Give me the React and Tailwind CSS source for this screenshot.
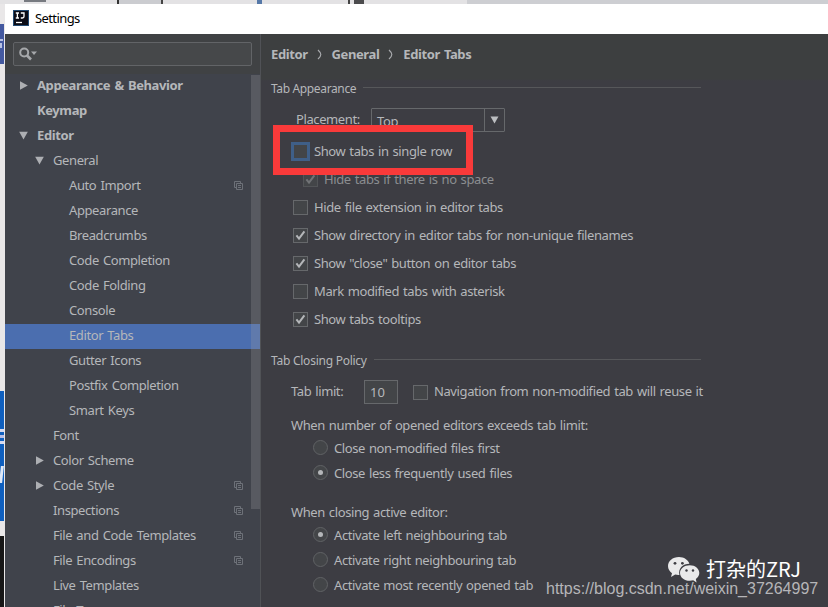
import React from "react";

const UI = "font-['Noto_Sans','Noto_Sans_CJK_SC',sans-serif]";

const TREE = [
  { label: "Appearance & Behavior", pad: "pl-[13px]", arrow: "right", bold: true },
  { label: "Keymap", pad: "pl-[13px]", bold: true },
  { label: "Editor", pad: "pl-[13px]", arrow: "down", bold: true },
  { label: "General", pad: "pl-[29px]", arrow: "down" },
  { label: "Auto Import", pad: "pl-[45px]", copy: true },
  { label: "Appearance", pad: "pl-[45px]" },
  { label: "Breadcrumbs", pad: "pl-[45px]" },
  { label: "Code Completion", pad: "pl-[45px]" },
  { label: "Code Folding", pad: "pl-[45px]" },
  { label: "Console", pad: "pl-[45px]" },
  { label: "Editor Tabs", pad: "pl-[45px]", selected: true },
  { label: "Gutter Icons", pad: "pl-[45px]" },
  { label: "Postfix Completion", pad: "pl-[45px]" },
  { label: "Smart Keys", pad: "pl-[45px]" },
  { label: "Font", pad: "pl-[29px]" },
  { label: "Color Scheme", pad: "pl-[29px]", arrow: "right" },
  { label: "Code Style", pad: "pl-[29px]", arrow: "right", copy: true },
  { label: "Inspections", pad: "pl-[29px]", copy: true },
  { label: "File and Code Templates", pad: "pl-[29px]", copy: true },
  { label: "File Encodings", pad: "pl-[29px]", copy: true },
  { label: "Live Templates", pad: "pl-[29px]" },
  { label: "File Types", pad: "pl-[29px]" },
];

function Arrow({ dir }) {
  return (
    <svg width="11" height="11" viewBox="0 0 11 11" className="block" fill="#adafb3">
      {dir === "right" && <path d="M2 1.2 L9.8 5.5 L2 9.8Z" />}
      {dir === "down" && <path d="M1.2 1.8 H9.8 L5.5 9.6Z" />}
    </svg>
  );
}

function CopyIcon() {
  return (
    <svg width="10" height="10" viewBox="0 0 10 10" fill="none" stroke="#6d7178" className="block">
      <path d="M2.5 6.5 H0.5 V0.5 H6.5 V2.5" />
      <path d="M2.5 2.5 H8.5 V8.5 H2.5Z" />
      <path d="M4 4.5 H7 M4 6.5 H7" />
    </svg>
  );
}

function TreeRow({ item }) {
  return (
    <div className={`flex h-[25px] shrink-0 items-center pb-[2px] ${item.pad} ${item.selected ? "bg-[#4b6eaf]" : ""}`}>
      <div className="w-[19px] shrink-0">
        <Arrow dir={item.arrow} />
      </div>
      <span className={`relative -top-px grow tracking-[-0.4px] whitespace-nowrap [word-spacing:1.2px] ${item.bold ? "font-bold" : ""}`}>
        {item.label}
      </span>
      {item.copy && (
        <div className="mr-[16px]">
          <CopyIcon />
        </div>
      )}
    </div>
  );
}

function Check({ checked, focus, dim }) {
  if (focus) {
    return <span className="-mx-[2px] block size-[19px] shrink-0 border-[3px] border-[#3f5f88] bg-[#434548]" />;
  }
  return (
    <span className={`flex size-[15px] shrink-0 items-center justify-center border bg-[#434548] ${dim ? "border-[#525457]" : "border-[#66686b]"}`}>
      {checked && (
        <svg width="13" height="13" viewBox="0 0 13 13" fill="none" stroke={dim ? "#717376" : "#b4b6b9"} strokeWidth="2">
          <path d="M2.4 6.4 L5 9.6 L10.4 2.4" />
        </svg>
      )}
    </span>
  );
}

function CheckRow({ label, pad = "pl-[22px]", ...rest }) {
  return (
    <div className={`flex h-7 items-center gap-[6px] pb-px ${pad} ${rest.dim ? "text-[#8b8d90]" : ""}`}>
      <Check {...rest} />
      <span className="relative -top-px whitespace-nowrap">{label}</span>
    </div>
  );
}

function RadioRow({ label, on }) {
  return (
    <div className="flex h-[25px] items-center gap-[6px] pb-[2px] pl-[42px]">
      <span className="flex size-[15px] items-center justify-center rounded-full border border-[#606265] bg-[#434548]">
        {on && <span className="size-[5px] rounded-full bg-[#b4b6b9]" />}
      </span>
      <span className="whitespace-nowrap">{label}</span>
    </div>
  );
}

function SectionTitle({ children, track }) {
  return (
    <div className="flex h-7 w-[430px] items-center gap-[7px] text-[12px]">
      <span className={`whitespace-nowrap [word-spacing:0px] ${track}`}>{children}</span>
      <span className="mb-[3px] h-px grow bg-[#56575a]" />
    </div>
  );
}

function Chevron() {
  return (
    <svg width="6" height="11" viewBox="0 0 6 11" fill="none" stroke="#a9abae" strokeWidth="1.2" className="relative top-px">
      <path d="M1 1 Q3.8 3.5 3.8 5.5 Q3.8 7.5 1 10" />
    </svg>
  );
}

function Sidebar() {
  return (
    <div className="relative flex w-[256px] shrink-0 flex-col overflow-hidden border-r border-[#505256] bg-[#40434b]">
      <div className="h-10 shrink-0 bg-[#404244] px-2 pt-2">
        <div className="flex h-6 w-[239px] items-center rounded-[2px] border border-[#626467] bg-[#46484a] pb-px pl-[5px]">
          <svg width="19" height="14" viewBox="0 0 19 14" fill="none" stroke="#a6a8ab">
            <circle cx="5.2" cy="5.5" r="4" strokeWidth="2" />
            <path d="M8 8.5 L12 12.5" strokeWidth="2.6" />
            <path d="M12 4.5 H18 L15 8Z" fill="#a6a8ab" stroke="none" />
          </svg>
        </div>
      </div>
      {TREE.map((item) => (
        <TreeRow key={item.label} item={item} />
      ))}
      <div className="absolute top-[41px] right-0 h-[434px] w-[9px] bg-[#9ea0a4]/25" />
    </div>
  );
}

function Content() {
  return (
    <div className="flex grow flex-col bg-[#3d3d43] bg-linear-to-b from-[#3d3f40] from-[45px] to-[#3d3d43] to-[47px] pl-[10px] tracking-[-0.4px] [word-spacing:1px]">
      <div className="flex h-[41px] items-center gap-[9px] pb-[2px] font-bold">
        <span>Editor</span>
        <Chevron />
        <span>General</span>
        <Chevron />
        <span>Editor Tabs</span>
      </div>
      <SectionTitle track="tracking-[-0.36px]">Tab Appearance</SectionTitle>
      <div className="flex h-[35px] items-start pt-[5px] pl-[25px]">
        <span className="w-[75px] leading-[23px]">Placement:</span>
        <div className="flex h-6 w-[134px] rounded-[1px] border border-[#66686b]">
          <span className="grow pl-[5px] leading-6">Top</span>
          <span className="flex w-5 items-center justify-center border-l border-[#66686b]">
            <svg width="9" height="8" viewBox="0 0 9 8" fill="#bcbec1">
              <path d="M0.5 0.5 H8.5 L4.5 7.5Z" />
            </svg>
          </span>
        </div>
      </div>
      <CheckRow label="Show tabs in single row" focus />
      <CheckRow label="Hide tabs if there is no space" checked dim pad="pl-[32px]" />
      <CheckRow label="Hide file extension in editor tabs" />
      <CheckRow label="Show directory in editor tabs for non-unique filenames" checked />
      <CheckRow label={'Show "close" button on editor tabs'} checked />
      <CheckRow label="Mark modified tabs with asterisk" />
      <CheckRow label="Show tabs tooltips" checked />
      <div className="mt-[13px]">
        <SectionTitle track="tracking-[-0.25px]">Tab Closing Policy</SectionTitle>
      </div>
      <div className="flex h-[34px] items-center pl-5">
        <span className="relative -top-px w-[73px]">Tab limit:</span>
        <span className="mr-[15px] flex h-6 w-[34px] items-center border border-[#66686b] bg-[#434548] pb-px pl-[5px] tracking-normal">10</span>
        <Check />
        <span className="relative -top-px ml-[6px] whitespace-nowrap">Navigation from non-modified tab will reuse it</span>
      </div>
      <div className="mt-[6px] h-[21px] pl-5 leading-[21px]">When number of opened editors exceeds tab limit:</div>
      <RadioRow label="Close non-modified files first" />
      <RadioRow label="Close less frequently used files" on />
      <div className="mt-4 h-[21px] pl-5 leading-[21px]">When closing active editor:</div>
      <RadioRow label="Activate left neighbouring tab" on />
      <RadioRow label="Activate right neighbouring tab" />
      <RadioRow label="Activate most recently opened tab" />
    </div>
  );
}

function DesktopEdge() {
  return (
    <div className="flex w-[5px] shrink-0 flex-col bg-[#e9e7e8]">
      <div className="mt-5 h-10 w-1 bg-[#4459a0] pt-[15px]">
        <div className="h-[2px] w-[3px] bg-[#b9c2e2]" />
        <div className="mt-[2px] h-[5px] w-[2px] bg-[#b9c2e2]" />
      </div>
      <div className="mt-[327px] h-[130px] w-1 bg-[#0f5fbe] pt-[38px]">
        <div className="h-[3px] bg-[#d5daf0]" />
        <div className="mt-[3px] h-[3px] bg-[#b9bfe6]" />
        <div className="mt-[3px] h-[3px] bg-[#d5daf0]" />
        <div className="mt-[22px] h-[17px] w-[3px] -skew-x-6 bg-[#dfe8f6]" />
      </div>
      <div className="mt-[15px] w-1 grow bg-[#161616]" />
    </div>
  );
}

function Watermark() {
  return (
    <>
      <div className="absolute top-[554px] left-[667px] flex items-center gap-[6px]">
        <svg width="33" height="29" viewBox="0 0 33 29" fill="#e9e9ea">
          <path d="M12 2 C5.5 2 1 6 1 11 C1 14 2.6 16.6 5 18.2 L4 22 L8.2 19.6 C9.6 20 11 20.1 12.4 20 C11 13 16 9 22.4 8.8 C21.2 4.8 17 2 12 2Z" />
          <path d="M22.8 10.2 C17.2 10.2 13 13.6 13 18 C13 22.4 17.2 25.8 22.8 25.8 C24 25.8 25.2 25.6 26.2 25.3 L29.6 27.4 L28.8 24 C31 22.6 32.3 20.4 32.3 18 C32.3 13.6 28.2 10.2 22.8 10.2Z" />
          <g fill="#3d3d43">
            <circle cx="8" cy="8.3" r="1.4" />
            <circle cx="15.4" cy="8.3" r="1.4" />
            <circle cx="19.5" cy="15.5" r="1.2" />
            <circle cx="26" cy="15.5" r="1.2" />
          </g>
        </svg>
        <span className="font-['Noto_Sans_CJK_SC',sans-serif] text-[20px] leading-[30px] whitespace-nowrap text-white">打杂的ZRJ</span>
      </div>
      <div className="absolute top-[579px] left-[546px] font-['Liberation_Sans',sans-serif] text-[16px] leading-5 whitespace-nowrap text-[#b5b5b8]">
        https://blog.csdn.net/weixin_37264997
      </div>
    </>
  );
}

export default function App() {
  return (
    <div className={`relative flex h-[607px] w-[828px] flex-col overflow-hidden text-[13px] leading-[18px] text-[#b5b7ba] ${UI}`}>
      <div className="flex h-1 shrink-0 items-stretch bg-[#e3e2e4]">
        <div className="ml-[24px] h-[2px] w-[22px] bg-[#777a80]" />
        <div className="ml-[71px] w-[2px] bg-[#333]" />
        <div className="w-[42px] bg-[#cbccd0]" />
        <div className="w-[2px] bg-[#444]" />
        <div className="ml-[94px] w-[5px] bg-[#5578a8]" />
        <div className="ml-[86px] w-[2px] bg-[#444]" />
        <div className="ml-[4px] w-[10px] bg-[#4b4b4d]" />
        <div className="ml-[103px] grow bg-[#cdced2]" />
      </div>
      <div className="flex min-h-0 grow">
        <DesktopEdge />
        <div className="flex grow flex-col">
          <div className="flex h-[30px] shrink-0 items-center gap-[6px] bg-white pb-[2px] pl-2 text-black">
            <svg width="16" height="16" viewBox="0 0 16 16">
              <rect width="16" height="16" fill="#234a72" />
              <rect x="1" y="1" width="14" height="14" fill="#0b0c16" />
              <path d="M2.8 3 H6 M4.4 3 V8 M2.8 8 H6 M7.8 3 H11 V6.6 Q11 8 9.4 8 H7.8" fill="none" stroke="#fff" strokeWidth="1.3" />
              <path d="M3 12.5 H9" stroke="#fff" strokeWidth="1.3" />
            </svg>
            <span className="tracking-[-0.6px]">Settings</span>
          </div>
          <div className="flex min-h-0 grow">
            <Sidebar />
            <Content />
          </div>
        </div>
      </div>
      <div className="absolute top-[125px] left-[273px] h-[50px] w-[200px] border-[7px] border-[#f93a3a]" />
      <Watermark />
    </div>
  );
}
